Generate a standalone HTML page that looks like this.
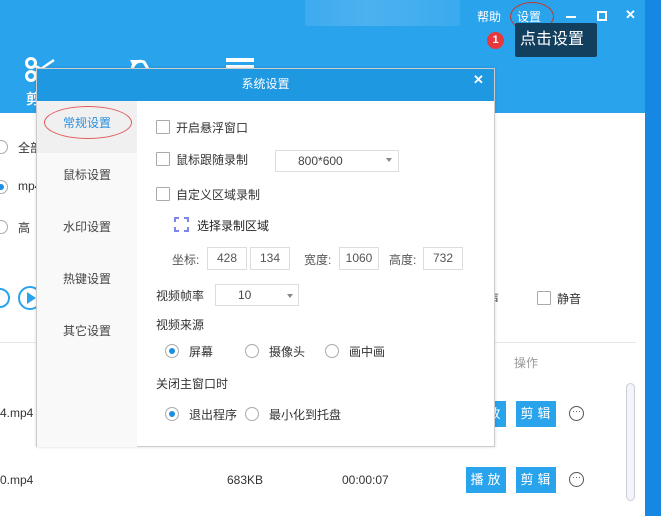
<!DOCTYPE html>
<html><head><meta charset="utf-8"><style>
*{margin:0;padding:0;box-sizing:border-box}
body{width:661px;height:516px;position:relative;overflow:hidden;background:#fff;font-family:"Liberation Sans","Noto Sans CJK SC",sans-serif;font-size:12px;color:#333}
.a{position:absolute}
.cb{position:absolute;width:14px;height:14px;border:1px solid #aaa;background:#fff;border-radius:1px}
.rd{position:absolute;width:14px;height:14px;border:1px solid #aaa;border-radius:50%;background:#fff}
.rd.on::after{content:"";position:absolute;left:3px;top:3px;width:6px;height:6px;border-radius:50%;background:#1e8fe0}
.in{position:absolute;height:23px;border:1px solid #ddd;text-align:center;line-height:21px;color:#555;font-size:12px}
.btn{position:absolute;width:40px;height:26px;background:#2aa3ed;color:#fff;text-align:center;line-height:26px;font-size:13px;letter-spacing:4px;padding-left:3px}
.dots{position:absolute;width:15px;height:15px;border:1.5px solid #555;border-radius:50%;font-size:9px;line-height:8px;text-align:center;color:#555}
.side{position:absolute;left:0;width:100px;height:52px;text-align:center;line-height:44px;color:#444;font-size:12px}
</style></head><body>
<div class="a" style="left:0;top:0;width:661px;height:113px;background:#2aa3ed"></div>
<div class="a" style="left:645px;top:0;width:16px;height:516px;background:#1787e4"></div>
<div class="a" style="left:305px;top:0;width:155px;height:26px;background:linear-gradient(90deg,#3cabee,#4db2ef 40%,#3aaaee);"></div>
<div class="a" style="left:477px;top:8px;color:#fff;font-size:12px">帮助</div>
<div class="a" style="left:517px;top:8px;color:#fff;font-size:12px">设置</div>
<div class="a" style="left:510px;top:2px;width:44px;height:29px;border:1px solid #c0392b;border-radius:50%"></div>
<div class="a" style="left:566px;top:16px;width:10px;height:2px;background:#fff"></div>
<div class="a" style="left:597px;top:11px;width:10px;height:10px;border:2px solid #fff"></div>
<div class="a" style="left:625px;top:7px;color:#fff;font-size:13px;font-weight:bold">✕</div>
<div class="a" style="left:487px;top:32px;width:17px;height:17px;border-radius:50%;background:#e8383d;color:#fff;font-size:11px;text-align:center;line-height:17px;font-weight:bold">1</div>
<div class="a" style="left:510px;top:36px;width:0;height:0;border:5px solid transparent;border-right-color:#123f5e"></div>
<div class="a" style="left:515px;top:23px;width:82px;height:34px;background:#123f5e;border-radius:2px;color:#fff;font-size:16px;line-height:34px;padding-left:5px">点击设置</div>
<svg class="a" style="left:24px;top:56px" width="34" height="28"><circle cx="7" cy="7" r="4.5" fill="none" stroke="#fff" stroke-width="3"/><circle cx="7" cy="20" r="4.5" fill="none" stroke="#fff" stroke-width="3"/><path d="M11 17 L30 4" stroke="#fff" stroke-width="2.5"/><path d="M11 10 L20 14" stroke="#fff" stroke-width="2.5"/></svg>
<svg class="a" style="left:128px;top:56px" width="26" height="14"><path d="M4 12 Q8 3 16 6 L20 13" fill="none" stroke="#fff" stroke-width="3"/><path d="M2 4 L6 12 L10 4" fill="#fff"/></svg>
<div class="a" style="left:226px;top:58px;width:28px;height:4px;background:#fff"></div>
<div class="a" style="left:226px;top:65px;width:28px;height:3px;background:#fff"></div>
<div class="a" style="left:26px;top:89px;color:#fff;font-size:14px;font-weight:bold">剪</div>
<div class="rd" style="left:-6px;top:140px"></div><div class="a" style="left:18px;top:139px">全部</div>
<div class="rd on" style="left:-6px;top:180px"></div><div class="a" style="left:18px;top:179px">mp4</div>
<div class="rd" style="left:-6px;top:220px"></div><div class="a" style="left:18px;top:219px">高</div>
<div class="a" style="left:-10px;top:288px;width:20px;height:20px;border:2.5px solid #2aa3ed;border-radius:50%"></div>
<div class="a" style="left:18px;top:286px;width:24px;height:24px;border:2.5px solid #2aa3ed;border-radius:50%"></div>
<div class="a" style="left:27px;top:292px;border-left:9px solid #2aa3ed;border-top:6px solid transparent;border-bottom:6px solid transparent"></div>
<div class="a" style="left:487px;top:290px">声</div>
<div class="cb" style="left:537px;top:291px"></div><div class="a" style="left:557px;top:290px">静音</div>
<div class="a" style="left:0;top:342px;width:636px;height:1px;background:#e6e6e6"></div>
<div class="a" style="left:514px;top:354px;color:#999">操作</div>
<div class="a" style="left:0;top:406px">4.mp4</div>
<div class="btn" style="left:466px;top:401px">播放</div>
<div class="btn" style="left:516px;top:401px">剪辑</div>
<div class="dots" style="left:569px;top:406px">···</div>
<div class="a" style="left:0;top:473px">0.mp4</div>
<div class="a" style="left:227px;top:473px">683KB</div>
<div class="a" style="left:342px;top:473px">00:00:07</div>
<div class="btn" style="left:466px;top:467px">播放</div>
<div class="btn" style="left:516px;top:467px">剪辑</div>
<div class="dots" style="left:569px;top:472px">···</div>
<div class="a" style="left:626px;top:383px;width:9px;height:118px;border:1px solid #ccd;border-radius:5px;background:#f3f5f8"></div>

<div class="a" style="left:36px;top:68px;width:459px;height:379px;background:#fff;border:1px solid #ccc;box-shadow:0 0 3px rgba(0,0,0,.15)">
 <div class="a" style="left:0;top:0;width:457px;height:32px;background:#1f98e2;color:#fff;text-align:center;line-height:30px;font-size:12px">系统设置</div>
 <div class="a" style="left:436px;top:3px;color:#fff;font-size:13px;font-weight:bold">✕</div>
 <div class="a" style="left:0;top:32px;width:100px;height:346px;background:#f9f9f9">
  <div class="side" style="top:0;background:#f0f0f0;color:#2a8fdd">常规设置</div>
  <div class="a" style="left:7px;top:5px;width:88px;height:33px;border:1px solid #e35a5a;border-radius:50%"></div>
  <div class="side" style="top:52px">鼠标设置</div>
  <div class="side" style="top:104px">水印设置</div>
  <div class="side" style="top:156px">热键设置</div>
  <div class="side" style="top:208px">其它设置</div>
 </div>
</div>
<div class="cb" style="left:156px;top:120px"></div><div class="a" style="left:176px;top:119px">开启悬浮窗口</div>
<div class="cb" style="left:156px;top:152px"></div><div class="a" style="left:176px;top:151px">鼠标跟随录制</div>
<div class="a" style="left:275px;top:150px;width:124px;height:22px;border:1px solid #ddd;line-height:20px;padding-left:22px;color:#444">800*600</div>
<div class="a" style="left:386px;top:158px;border-top:4px solid #888;border-left:3px solid transparent;border-right:3px solid transparent"></div>
<div class="cb" style="left:156px;top:187px"></div><div class="a" style="left:176px;top:186px">自定义区域录制</div>
<svg class="a" style="left:174px;top:217px" width="15" height="15"><path d="M1 5V1H5M10 1H14V5M14 10V14H10M5 14H1V10" fill="none" stroke="#7b86e8" stroke-width="2"/></svg>
<div class="a" style="left:197px;top:217px;color:#222">选择录制区域</div>
<div class="a" style="left:172px;top:251px;color:#555">坐标:</div>
<div class="in" style="left:207px;top:247px;width:40px">428</div>
<div class="in" style="left:250px;top:247px;width:40px">134</div>
<div class="a" style="left:304px;top:251px;color:#555">宽度:</div>
<div class="in" style="left:339px;top:247px;width:40px">1060</div>
<div class="a" style="left:389px;top:251px;color:#555">高度:</div>
<div class="in" style="left:423px;top:247px;width:40px">732</div>
<div class="a" style="left:156px;top:287px">视频帧率</div>
<div class="a" style="left:215px;top:284px;width:84px;height:22px;border:1px solid #ddd;line-height:20px;padding-left:22px;color:#444">10</div>
<div class="a" style="left:287px;top:294px;border-top:4px solid #888;border-left:3px solid transparent;border-right:3px solid transparent"></div>
<div class="a" style="left:156px;top:316px">视频来源</div>
<div class="rd on" style="left:165px;top:344px"></div><div class="a" style="left:189px;top:343px">屏幕</div>
<div class="rd" style="left:245px;top:344px"></div><div class="a" style="left:269px;top:343px">摄像头</div>
<div class="rd" style="left:325px;top:344px"></div><div class="a" style="left:349px;top:343px">画中画</div>
<div class="a" style="left:156px;top:375px">关闭主窗口时</div>
<div class="rd on" style="left:165px;top:407px"></div><div class="a" style="left:189px;top:406px">退出程序</div>
<div class="rd" style="left:245px;top:407px"></div><div class="a" style="left:269px;top:406px">最小化到托盘</div>
</body></html>
